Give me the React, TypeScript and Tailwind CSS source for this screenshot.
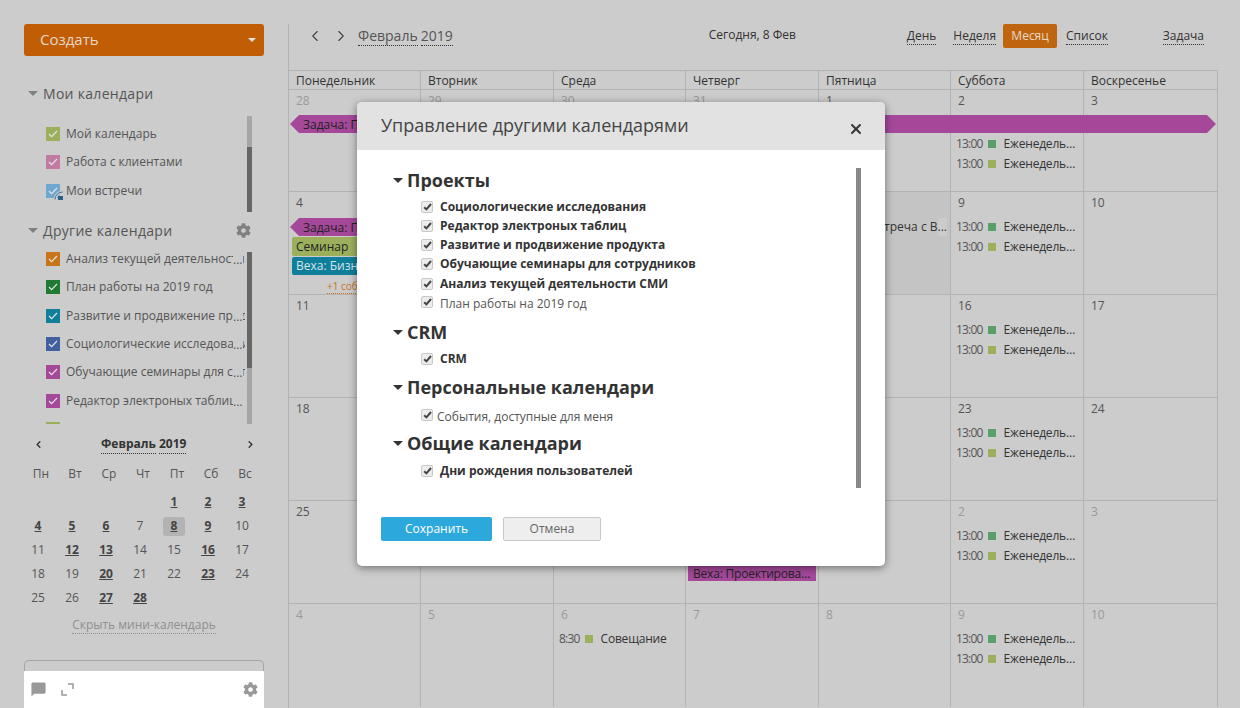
import React from "react";
import { ChevronLeft, ChevronRight, X } from "lucide-react";
import { FaCog } from "react-icons/fa";
import { MdChatBubble } from "react-icons/md";

const WEEKDAYS = ["Понедельник", "Вторник", "Среда", "Четверг", "Пятница", "Суббота", "Воскресенье"];
const MINI_WEEKDAYS = ["Пн", "Вт", "Ср", "Чт", "Пт", "Сб", "Вс"];
const MINI_BOLD = [1, 2, 3, 4, 5, 6, 8, 9, 12, 13, 16, 20, 23, 27, 28];

const MY_CALENDARS = [
  { title: "Мой календарь", color: "bg-[#9cb05c]" },
  { title: "Работа с клиентами", color: "bg-[#c17ba3]" },
  { title: "Мои встречи", color: "bg-[#6ea7cf]", shared: true },
];

const OTHER_CALENDARS = [
  { title: "Анализ текущей деятельности СМИ", color: "bg-[#c8741a]", dots: true },
  { title: "План работы на 2019 год", color: "bg-[#1f7a32]" },
  { title: "Развитие и продвижение продукта", color: "bg-[#0f7f9c]", dots: true },
  { title: "Социологические исследования", color: "bg-[#4060a0]", dots: true },
  { title: "Обучающие семинары для сотрудников", color: "bg-[#a5489a]", dots: true },
  { title: "Редактор электроных таблиц", color: "bg-[#a5489a]", dots: true },
  { title: "CRM", color: "bg-[#9cb05c]" },
];

const Caret = ({ dark }: { dark?: boolean }) => (
  <span
    className={`block w-0 h-0 border-x-[5px] border-t-[5px] border-x-transparent ${
      dark ? "border-t-[#333333]" : "border-t-[#808080]"
    }`}
  />
);

const Scrollbar = ({ children, className }: { children: React.ReactNode; className: string }) => (
  <div className={`absolute w-[5px] flex flex-col ${className}`}>{children}</div>
);

const CalendarItem = ({ item }: { item: { title: string; color: string; shared?: boolean; dots?: boolean } }) => (
  <li className="relative flex items-start h-[28.33px] pl-[22px]">
    <span className={`relative w-[14px] h-[14px] shrink-0 flex items-center justify-center ${item.color}`}>
      <svg width="10" height="8" viewBox="0 0 10 8" fill="none" stroke="#e4e4e4" strokeWidth="1.2">
        <path d="M1 4l2.6 2.6L9 1" />
      </svg>
      {item.shared && (
        <svg className="absolute -right-[3px] -bottom-[2px]" width="9" height="9" viewBox="0 0 9 9" fill="none">
          <path d="M1 9a8 8 0 0 1 8-8" stroke="#cccccc" strokeWidth="3" />
          <path d="M1 8.5a7.5 7.5 0 0 1 7.5-7.5" stroke="#3d6f96" strokeWidth="1" />
          <rect x="4" y="5" width="5" height="4" fill="#2c5d84" />
        </svg>
      )}
    </span>
    <span className="relative ml-[6px] w-[179px] overflow-hidden whitespace-nowrap text-[12px] leading-[14px] text-[#555555]">
      {item.title}
      {item.dots && (
        <span className="absolute left-[167px] top-0 w-[10px] h-[15px] bg-[#cccccc] text-[12px] leading-[15px]">
          ...
        </span>
      )}
    </span>
  </li>
);

const MiniCalendar = () => {
  const days: (number | null)[] = [null, null, null, null];
  for (let i = 1; i <= 28; i++) days.push(i);
  return (
    <div className="mt-[10px] ml-[-3px] w-[238px] text-[12px] text-[#555555]">
      <div className="flex items-center h-[20px] pl-[12px] pr-[3px]">
        <ChevronLeft size={11} strokeWidth={3} className="text-[#333333]" />
        <div className="ml-[57px] font-bold text-[#333333] flex gap-[3px] leading-[18px]">
          <span className="border-b border-dotted border-[#333333]">Февраль</span>
          <span className="border-b border-dotted border-[#333333]">2019</span>
        </div>
        <ChevronRight size={11} strokeWidth={3} className="ml-auto text-[#333333]" />
      </div>
      <div className="mt-[8px] ml-[3px] mr-[-3px] grid grid-cols-7 h-[24px] items-center text-center">
        {MINI_WEEKDAYS.map((day) => (
          <span key={day}>{day}</span>
        ))}
      </div>
      <div className="mt-[4px] grid grid-cols-7 auto-rows-[24px] items-center justify-items-center">
        {days.map((day, index) => {
          if (day === null) return <span key={index} />;
          const bold = MINI_BOLD.includes(day);
          return (
            <span
              key={index}
              className={`flex items-center justify-center h-[19px] w-[22px] rounded-[3px] ${
                day === 8 ? "bg-[#b3b3b3]" : ""
              } ${bold ? "font-bold underline text-[#444444]" : ""}`}
            >
              {day}
            </span>
          );
        })}
      </div>
    </div>
  );
};

const Sidebar = () => (
  <aside className="w-[288px] h-full shrink-0 flex flex-col">
    <div className="px-[24px] pt-[24px]">
      <button className="w-[240px] h-[32px] rounded-[3px] bg-[#c05d05] flex items-center justify-between pl-[16px] pr-[4px] text-[15px] text-[#e8d8c8]">
        <span className="-mt-[2px]">Создать</span>
        <span className="block w-0 h-0 mr-[4px] border-x-[4px] border-t-[4px] border-x-transparent border-t-[#e4e4e4]" />
      </button>
      <div className="mt-[27px] h-[20px] flex items-center gap-[5px] pl-[4px] text-[14px] text-[#555555] tracking-[0.3px]">
        <Caret />
        Мои календари
      </div>
      <div className="relative mt-[13px] h-[96px] pt-[11px]">
        <ul>
          {MY_CALENDARS.map((item) => (
            <CalendarItem key={item.title} item={item} />
          ))}
        </ul>
        <Scrollbar className="left-[223px] top-0 h-[96px]">
          <div className="h-[31px] bg-[#a6a6a6]" />
          <div className="flex-1 bg-[#666666]" />
        </Scrollbar>
      </div>
      <div className="mt-[8px] h-[20px] flex items-center gap-[5px] pl-[4px] text-[14px] text-[#555555] tracking-[0.3px]">
        <Caret />
        Другие календари
        <FaCog size={15} className="ml-auto mr-[13px] text-[#808080]" />
      </div>
      <div className="relative mt-[12px] h-[172px] overflow-hidden">
        <ul>
          {OTHER_CALENDARS.map((item) => (
            <CalendarItem key={item.title} item={item} />
          ))}
        </ul>
        <Scrollbar className="left-[223px] top-0 h-[172px]">
          <div className="h-[116px] bg-[#666666]" />
          <div className="flex-1 bg-[#a6a6a6]" />
        </Scrollbar>
      </div>
      <MiniCalendar />
      <div className="mt-[6px] h-[20px] flex justify-center">
        <span className="text-[12px] leading-[17px] h-[18px] text-[#8f8f8f] border-b border-dotted border-[#8f8f8f]">
          Скрыть мини-календарь
        </span>
      </div>
      <div className="mt-[24px] h-[11px] border border-b-0 border-[#a6a6a6] rounded-t-[5px]" />
      <div className="h-[37px] bg-white flex items-center pl-[6px] pr-[6px] text-[#999999]">
        <MdChatBubble size={17} />
        <svg className="ml-[14px]" width="13" height="13" viewBox="0 0 13 13" fill="none" stroke="currentColor" strokeWidth="1.5">
          <path d="M7 1h5v5M1 7v5h5" />
        </svg>
        <FaCog size={15} className="ml-auto" />
      </div>
    </div>
  </aside>
);

type EventProps = { time: string; color: string; title: string };

const EventRow = ({ time, color, title }: EventProps) => (
  <div className="flex items-center h-[20px] pl-[5px] pr-[1px] text-[12px] text-[#333333]">
    <span className="text-[#555555] tracking-[-0.8px]">{time}</span>
    <span className={`ml-[5px] w-[8px] h-[8px] shrink-0 ${color}`} />
    <span className="ml-[8px] min-w-0 truncate tracking-[-0.2px]">{title}</span>
  </div>
);

const WeeklyEvents = ({ top }: { top: string }) => (
  <div className={top}>
    <EventRow time="13:00" color="bg-[#5a9e68]" title="Еженедельная встреча" />
    <EventRow time="13:00" color="bg-[#9cb05c]" title="Еженедельная встреча" />
  </div>
);

type Day = { n: number; muted?: boolean; today?: boolean; content?: React.ReactNode };

const Week = ({ days, children, height }: { days: Day[]; children?: React.ReactNode; height: string }) => (
  <div className={`relative grid grid-cols-[132px_133px_132px_133px_132px_133px_134px] border-t border-[#b3b3b3] ${height}`}>
    {days.map((day) => (
      <div
        key={`${day.n}-${day.muted}`}
        className={`border-r border-[#b3b3b3] min-w-0 ${day.today ? "bg-[#c4c4c4]" : ""}`}
      >
        <div className={`pt-[2px] pl-[7px] text-[12px] leading-[18px] ${day.muted ? "text-[#9a9a9a]" : "text-[#555555]"}`}>
          {day.n}
        </div>
        {day.content}
      </div>
    ))}
    {children}
  </div>
);

const taskShape = "[clip-path:polygon(9px_0,calc(100%-9px)_0,100%_50%,calc(100%-9px)_100%,9px_100%,0_50%)]";

const CalendarGrid = () => (
  <div className="mt-[22px] w-[929px] border-t border-[#b3b3b3] text-[12px]">
    <div className="grid grid-cols-[132px_133px_132px_133px_132px_133px_134px] h-[18px]">
      {WEEKDAYS.map((day) => (
        <div key={day} className="border-r border-[#b3b3b3] pl-[7px] leading-[20px] text-[#333333]">
          {day}
        </div>
      ))}
    </div>
    <Week
      height="h-[102px]"
      days={[
        { n: 28, muted: true },
        { n: 29, muted: true },
        { n: 30, muted: true },
        { n: 31, muted: true },
        { n: 1 },
        { n: 2, content: <WeeklyEvents top="mt-[24px]" /> },
        { n: 3 },
      ]}
    >
      <div className={`absolute left-[1px] top-[25px] w-[926px] h-[18px] bg-[#a5489a] pl-[13px] leading-[19px] text-[#222222] ${taskShape}`}>
        Задача: Проектирование системы
      </div>
    </Week>
    <Week
      height="h-[103px]"
      days={[
        {
          n: 4,
          content: (
            <div className="mt-[6px] ml-[1px] w-[129px] text-[12px]">
              <div className={`h-[18px] w-[300px] bg-[#a5489a] pl-[13px] leading-[19px] text-[#222222] ${taskShape}`}>
                Задача: Проектирование
              </div>
              <div className="mt-[1px] ml-[2px] h-[19px] bg-[#9cb05c] rounded-[2px] pl-[4px] leading-[19px] text-[#222222]">Семинар</div>
              <div className="mt-[1px] ml-[2px] h-[18px] bg-[#0f7f9c] rounded-[2px] pl-[4px] leading-[18px] text-[#d8e4e8]">
                Веха: Бизнес-план
              </div>
              <div className="mt-[4px] ml-[37px] text-[10px] leading-[14px] w-fit text-[#c8741a] border-b border-dotted border-[#c8741a]">
                +1 событие
              </div>
            </div>
          ),
        },
        { n: 5 },
        { n: 6 },
        { n: 7 },
        {
          n: 8,
          today: true,
          content: (
            <div className="mt-[6px] h-[18px] flex justify-end pr-[3px] leading-[18px] text-[#333333] whitespace-nowrap">
              Встреча с В<span className="bg-[#cccccc]">...</span>
            </div>
          ),
        },
        { n: 9, content: <WeeklyEvents top="mt-[5px]" /> },
        { n: 10 },
      ]}
    />
    <Week
      height="h-[103px]"
      days={[
        { n: 11 },
        { n: 12 },
        { n: 13 },
        { n: 14 },
        { n: 15 },
        { n: 16, content: <WeeklyEvents top="mt-[5px]" /> },
        { n: 17 },
      ]}
    />
    <Week
      height="h-[103px]"
      days={[
        { n: 18 },
        { n: 19 },
        { n: 20 },
        { n: 21 },
        { n: 22 },
        { n: 23, content: <WeeklyEvents top="mt-[5px]" /> },
        { n: 24 },
      ]}
    />
    <Week
      height="h-[103px]"
      days={[
        { n: 25 },
        { n: 26 },
        { n: 27 },
        {
          n: 28,
          content: (
            <div className="mt-[42px] mx-[2px] h-[18px] bg-[#a5489a] pl-[5px] leading-[22px] truncate tracking-[-0.2px] text-[#222222]">
              Веха: Проектирование
            </div>
          ),
        },
        { n: 1, muted: true },
        { n: 2, muted: true, content: <WeeklyEvents top="mt-[5px]" /> },
        { n: 3, muted: true },
      ]}
    />
    <Week
      height="h-[104px]"
      days={[
        { n: 4, muted: true },
        { n: 5, muted: true },
        { n: 6, muted: true, content: <div className="mt-[5px]"><EventRow time="8:30" color="bg-[#9cb05c]" title="Совещание" /></div> },
        { n: 7, muted: true },
        { n: 8, muted: true },
        { n: 9, muted: true, content: <WeeklyEvents top="mt-[5px]" /> },
        { n: 10, muted: true },
      ]}
    />
  </div>
);

const TopBar = () => (
  <div className="h-[24px] flex items-center text-[12px] text-[#333333]">
    <ChevronLeft size={18} strokeWidth={1.5} className="ml-[17px] text-[#444444]" />
    <ChevronRight size={18} strokeWidth={1.5} className="ml-[8px] text-[#444444]" />
    <div className="ml-[8px] flex gap-[3px] text-[14px] leading-[18px] text-[#555555]">
      <span className="border-b border-dotted border-[#333333]">Февраль</span>
      <span className="border-b border-dotted border-[#333333]">2019</span>
    </div>
    <span className="ml-[256px] w-[87px] text-[12px] -mt-[2px] whitespace-nowrap">Сегодня, 8 Фев</span>
    <span className="ml-[111px] leading-[16px] border-b border-dotted border-[#333333]">День</span>
    <span className="ml-[17px] leading-[16px] border-b border-dotted border-[#333333]">Неделя</span>
    <span className="ml-[7px] w-[54px] h-[24px] rounded-[2px] bg-[#c0650f] flex items-center justify-center text-[#e8d8c8]">
      Месяц
    </span>
    <span className="ml-[9px] leading-[16px] border-b border-dotted border-[#333333]">Список</span>
    <span className="ml-[55px] leading-[16px] border-b border-dotted border-[#333333]">Задача</span>
  </div>
);

const ModalSection = ({
  title,
  className,
  children,
}: {
  title: string;
  className: string;
  children: React.ReactNode;
}) => (
  <section className={className}>
    <h2 className="h-[20px] flex items-center gap-[4px] text-[18px] font-bold text-[#333333]">
      <Caret dark />
      {title}
    </h2>
    {children}
  </section>
);

const CheckRow = ({ title, bold = true, gap = "ml-[7px]", h = "h-[19.25px]" }: { title: string; bold?: boolean; gap?: string; h?: string }) => (
  <div className={`flex items-center pl-[28px] ${h}`}>
    <span
      className={`w-[12px] h-[12px] shrink-0 rounded-[2px] border border-[#c8c8c8] bg-[#ececec] flex items-center justify-center ${
        bold ? "" : "-mt-[4px]"
      }`}
    >
      <svg width="9" height="8" viewBox="0 0 9 8" fill="none" stroke="#444444" strokeWidth="2">
        <path d="M1.2 4.2l2.2 2.2L8 1" />
      </svg>
    </span>
    <span className={`${gap} text-[12px] ${bold ? "font-bold text-[#333333]" : "text-[#555555]"}`}>{title}</span>
  </div>
);

const Modal = () => (
  <div className="absolute left-[357px] top-[102px] w-[528px] h-[464px] rounded-[5px] bg-white shadow-[0_2px_8px_rgba(0,0,0,0.45)] overflow-hidden flex flex-col">
    <div className="h-[48px] shrink-0 bg-[#e2e2e2] flex items-center justify-between pl-[24px] pr-[21px] text-[18px] text-[#444444]">
      <span className="-mt-[2px]">Управление другими календарями</span>
      <X size={16} strokeWidth={3} className="mt-[6px] text-[#333333]" />
    </div>
    <div className="relative flex-1 pl-[36px] pt-[20px]">
      <ModalSection title="Проекты" className="">
        <div className="mt-[7px]">
          <CheckRow title="Социологические исследования" />
          <CheckRow title="Редактор электроных таблиц" />
          <CheckRow title="Развитие и продвижение продукта" />
          <CheckRow title="Обучающие семинары для сотрудников" />
          <CheckRow title="Анализ текущей деятельности СМИ" />
          <CheckRow title="План работы на 2019 год" bold={false} h="h-[22px]" />
        </div>
      </ModalSection>
      <ModalSection title="CRM" className="mt-[7px]">
        <div className="mt-[7px]">
          <CheckRow title="CRM" />
        </div>
      </ModalSection>
      <ModalSection title="Персональные календари" className="mt-[9px]">
        <div className="mt-[9.5px]">
          <CheckRow title="События, доступные для меня" bold={false} gap="ml-[4px]" />
        </div>
      </ModalSection>
      <ModalSection title="Общие календари" className="mt-[7px]">
        <div className="mt-[8px]">
          <CheckRow title="Дни рождения пользователей" />
        </div>
      </ModalSection>
      <Scrollbar className="left-[499px] top-[18px] h-[320px]">
        <div className="flex-1 bg-[#888888]" />
      </Scrollbar>
    </div>
    <div className="shrink-0 h-[49px] pl-[24px] flex items-start gap-[11px] text-[12px]">
      <button className="w-[111px] h-[24px] rounded-[2px] bg-[#2da8dc] text-white">Сохранить</button>
      <button className="w-[98px] h-[24px] rounded-[2px] bg-[#eeeeee] border border-[#c8c8c8] text-[#666666]">Отмена</button>
    </div>
  </div>
);

export default function App() {
  return (
    <div className="relative w-[1240px] h-[708px] overflow-hidden bg-[#cccccc] flex font-['Open_Sans',sans-serif]">
      <Sidebar />
      <main className="mt-[24px] border-l border-[#b3b3b3] flex-1 min-w-0">
        <TopBar />
        <CalendarGrid />
      </main>
      <Modal />
    </div>
  );
}
